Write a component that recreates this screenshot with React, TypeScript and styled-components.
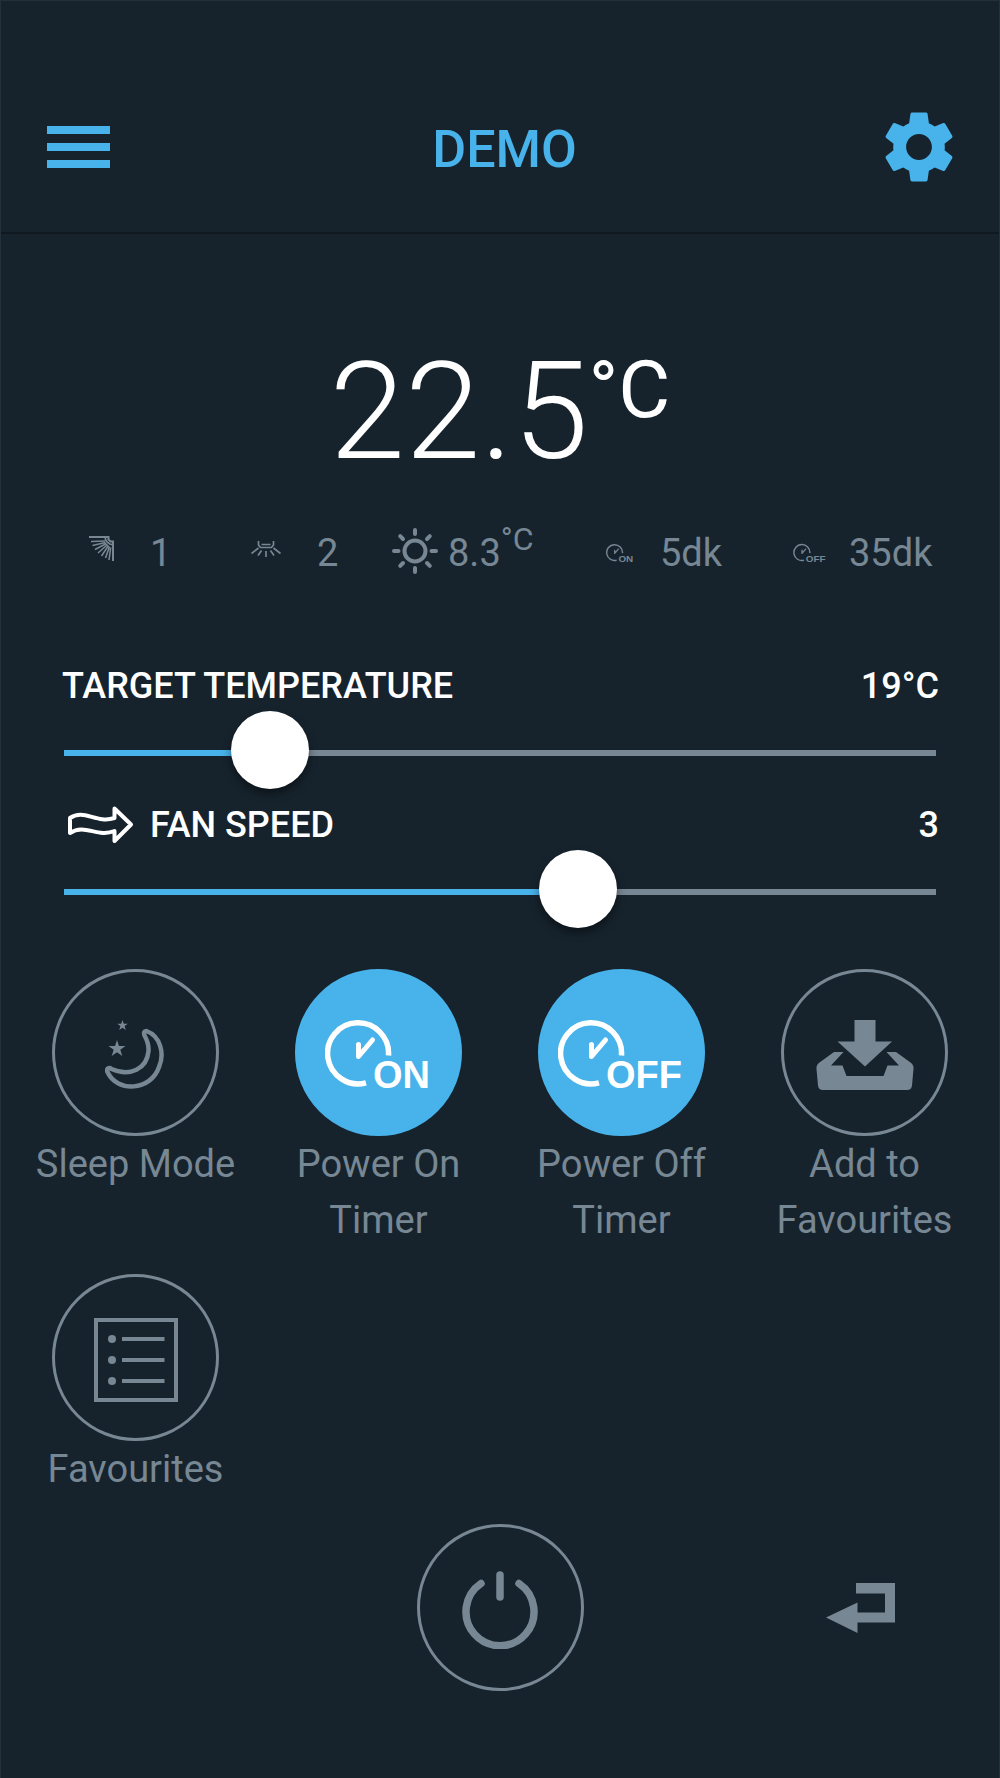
import { useState } from "react";
import type { CSSProperties, ReactNode } from "react";
import styled, { createGlobalStyle } from "styled-components";
import { MdSettings } from "react-icons/md";

const color = {
  background: "#16232d",
  edge: "#22303a",
  divider: "#10191f",
  accent: "#48b2ea",
  muted: "#778793",
  white: "#ffffff",
};

const GlobalStyle = createGlobalStyle`
  *, *::before, *::after { box-sizing: border-box; }
  body {
    margin: 0;
    background: ${color.background};
    color: ${color.muted};
    font-family: Roboto, "Liberation Sans", sans-serif;
  }
  button {
    padding: 0;
    border: 0;
    background: none;
    color: inherit;
    font: inherit;
    cursor: pointer;
  }
  svg { display: block; flex: none; }
`;

const Screen = styled.div`
  min-height: 100vh;
  border: 1px solid ${color.edge};
  border-bottom: 0;
`;

const Header = styled.header`
  display: grid;
  grid-template-columns: 1fr auto 1fr;
  align-items: center;
  padding: 103px 37px 42px 46px;
  border-bottom: 2px solid ${color.divider};
  color: ${color.accent};
`;

const HeaderButton = styled.button<{ $end?: boolean }>`
  justify-self: ${(p) => (p.$end ? "end" : "start")};
`;

const Title = styled.h1`
  margin: 0;
  padding-top: 6px;
  font-size: 52px;
  line-height: 60px;
  font-weight: 500;
`;

const Reading = styled.div`
  display: flex;
  justify-content: center;
  margin-top: 98px;
  color: ${color.white};
  font-size: 136px;
  line-height: 160px;
  font-weight: 300;
`;

const ReadingUnit = styled.span`
  font-size: 80px;
  line-height: 116px;
  font-weight: 400;
`;

const Stats = styled.ul`
  display: grid;
  grid-template-columns: 162fr 141fr 214fr 187fr 144fr;
  margin: 31px 0 0;
  padding: 0 62px 0 88px;
  list-style: none;
  font-size: 38px;
  line-height: 60px;
`;

const Stat = styled.li<{ $gap: number }>`
  display: flex;
  align-items: center;
  gap: ${(p) => p.$gap}px;
`;

const StatValue = styled.span`
  display: flex;
`;

const StatUnit = styled.span`
  font-size: 32px;
  line-height: 32px;
`;

const Sliders = styled.section`
  display: grid;
  gap: 11px;
  margin-top: 78px;
  padding: 0 63px 0 59px;
  color: ${color.white};
  font-size: 36px;
  line-height: 50px;
  font-weight: 500;
`;

const SliderHead = styled.div`
  display: flex;
  justify-content: space-between;
  margin: 0 -3px 0 2px;
`;

const SliderLabel = styled.label`
  display: flex;
  align-items: center;
  gap: 16px;
`;

const FlowIcon = styled.svg`
  margin-left: 6px;
`;

const Range = styled.input`
  display: block;
  width: 100%;
  height: 78px;
  margin: 0;
  appearance: none;
  cursor: pointer;
  background: linear-gradient(
      to right,
      ${color.accent} var(--fill),
      ${color.muted} var(--fill)
    )
    no-repeat 4px 39px / calc(100% - 4px) 6px;

  &::-webkit-slider-runnable-track {
    height: 78px;
  }
  &::-webkit-slider-thumb {
    appearance: none;
    width: 78px;
    height: 78px;
    border-radius: 50%;
    background: ${color.white};
    box-shadow: 0 5px 10px rgba(0, 0, 0, 0.45);
  }
`;

const Actions = styled.section`
  display: grid;
  grid-template-columns: repeat(4, 1fr);
  gap: 26px 0;
  margin-top: 41px;
  padding: 0 13px;
`;

const Action = styled.button`
  display: flex;
  flex-direction: column;
  align-items: center;
  justify-content: flex-start;
`;

const Disc = styled.span<{ $active?: boolean }>`
  display: grid;
  place-items: center;
  width: 167px;
  height: 167px;
  padding-top: 4px;
  border: 3px solid ${(p) => (p.$active ? color.accent : color.muted)};
  border-radius: 50%;
  background: ${(p) => (p.$active ? color.accent : "transparent")};
  color: ${(p) => (p.$active ? color.white : color.muted)};
`;

const ActionLabel = styled.span`
  font-size: 38px;
  line-height: 56px;
`;

const Footer = styled.footer`
  display: grid;
  grid-template-columns: 1fr auto 1fr;
  align-items: center;
  margin-top: 27px;
  padding: 0 103px 80px;
`;

const PowerButton = styled.button`
  grid-column: 2;
`;

const BackButton = styled.button`
  justify-self: end;
`;

function MenuIcon() {
  return (
    <svg width="63" height="43" viewBox="0 0 63 43" fill="currentColor" aria-hidden="true">
      <path d="M0 0h63v8H0zM0 17h63v8H0zM0 34h63v8H0z" />
    </svg>
  );
}

function VerticalSwingIcon() {
  return (
    <svg width="25" height="35" viewBox="0 0 25 35" fill="none" stroke="currentColor" strokeWidth="1.6" aria-hidden="true">
      <path d="M0 1h19.500v2.500l2 2H24V25" strokeWidth="2" />
      <path d="M16 1.500Q17 7.500 24 9" />
      <path d="M2 5.500l14-.5M3.500 9.500l13-3M6 13.500l11.500-6M9 17l9.500-8.500M12.500 20l7-10.500M16.500 22l4-11.500M20 24l1.700-12.500" />
    </svg>
  );
}

function HorizontalSwingIcon() {
  return (
    <svg width="30" height="24" viewBox="0 0 30 24" fill="none" stroke="currentColor" strokeWidth="1.700" aria-hidden="true">
      <path d="M7.500 0v4l2 2.500h11l2-2.500V0M10.500 3.500h9" />
      <path d="M7.500 7L.5 12.500M10.500 9.500l-3.500 5M15 10v6M19.500 9.500l3.500 5M22.500 7l7 5.500" />
    </svg>
  );
}

function SunIcon() {
  return (
    <svg width="46" height="50" viewBox="0 0 46 50" fill="none" stroke="currentColor" strokeWidth="4" strokeLinecap="round" aria-hidden="true">
      <circle cx="23" cy="23" r="10.500" />
      <path d="M23 2v4M23 40v4M2 23h4.500M39.500 23H44M8.200 8.200l2.800 2.800M35 35l2.800 2.800M8.200 37.800L11 35M35 11l2.800-2.800" />
    </svg>
  );
}

type TimerIconProps = { word: "ON" | "OFF"; height: number };

function TimerIcon({ word, height }: TimerIconProps) {
  const width = word === "ON" ? 108 : 128;
  return (
    <svg
      width={Math.round((width * height) / 84)}
      height={height}
      viewBox={`0 -7 ${width} 84`}
      fill="none"
      stroke="currentColor"
      strokeWidth="5.500"
      aria-hidden="true"
    >
      <path d="M63.500 35.500A30.500 30.500 0 1 0 41 62.800" />
      <path d="M33.500 24.500v12l14-16.500" strokeWidth="5" strokeLinecap="round" strokeLinejoin="round" />
      <text x="48" y="68" fill="currentColor" stroke="none" fontFamily="Liberation Sans, sans-serif" fontSize="38" fontWeight="700">
        {word}
      </text>
    </svg>
  );
}

function AirFlowIcon() {
  return (
    <FlowIcon width="66" height="38" viewBox="0 0 66 38" fill="none" stroke="currentColor" strokeWidth="4" strokeLinejoin="round" aria-hidden="true">
      <path d="M2 12C16 2 28 18 46.500 12V2.500L63 18.500L46.500 35V25C29 32 17 17 2 27Z" />
    </FlowIcon>
  );
}

function MoonIcon() {
  return (
    <svg width="62" height="70" viewBox="0 0 62 70" fill="none" aria-hidden="true">
      <path
        d="M41.500 11C55 16 60 33 54 47C46 71 12 73 2.500 52C1 48.500 4 47 6.500 49C25 57 42 49 43.500 31C44 24 42 20 39.500 15.500C38.500 12.500 39 11 41.500 11Z"
        stroke="currentColor"
        strokeWidth="4.500"
      />
      <path
        d="M17.500 0l1.300 3.700h4l-3.200 2.400 1.200 3.900-3.300-2.300-3.300 2.300 1.200-3.900-3.200-2.400h4zM12 20l2 6h6.500l-5.200 3.800 2 6.200-5.300-3.800-5.300 3.800 2-6.200L3.500 26H10z"
        fill="currentColor"
      />
    </svg>
  );
}

function SaveIcon() {
  return (
    <svg width="98" height="70" viewBox="0 0 98 70" fill="currentColor" aria-hidden="true">
      <path d="M38.500 0h21v21.500H76L49 46.500L21.500 21.500h17z" />
      <path d="M18 32h9.500L15 45.500h11.500L30.500 56h37l4-10.500H83L70.500 32H80l14.500 10.500Q98 45 97.500 49L96 65.500Q95.500 70 91 70H7Q2.500 70 2 65.500L.5 49Q0 45 3.500 42.500z" />
    </svg>
  );
}

function ListIcon() {
  return (
    <svg width="84" height="84" viewBox="0 0 84 84" fill="none" stroke="currentColor" strokeWidth="4" aria-hidden="true">
      <path d="M2 2h80v80H2z" />
      <path d="M28 21h42.500M28 42h42.500M28 63h42.500" />
      <g fill="currentColor" stroke="none">
        <circle cx="18" cy="21" r="4" />
        <circle cx="18" cy="42" r="4" />
        <circle cx="18" cy="63" r="4" />
      </g>
    </svg>
  );
}

function PowerIcon() {
  return (
    <svg width="76" height="78" viewBox="0 0 76 78" fill="none" stroke="currentColor" strokeWidth="7.500" strokeLinecap="round" aria-hidden="true">
      <path d="M19 12.500A34 34 0 1 0 57 12.500M38 4v22" />
    </svg>
  );
}

function ReturnIcon() {
  return (
    <svg width="70" height="50" viewBox="0 0 70 50" fill="currentColor" aria-hidden="true">
      <path d="M30 0h39v39.500H31.500V50L0 34.500L31.500 19.500v10H59v-19H30z" />
    </svg>
  );
}

type SliderProps = {
  id: string;
  label: string;
  icon?: ReactNode;
  min: number;
  max: number;
  initial: number;
  unit?: string;
};

function Slider({ id, label, icon, min, max, initial, unit = "" }: SliderProps) {
  const [value, setValue] = useState(initial);
  const fill = `${((value - min) / (max - min)) * 100}%`;
  return (
    <div>
      <SliderHead>
        <SliderLabel htmlFor={id}>
          {icon}
          {label}
        </SliderLabel>
        <output htmlFor={id}>
          {value}
          {unit}
        </output>
      </SliderHead>
      <Range
        id={id}
        type="range"
        min={min}
        max={max}
        value={value}
        onChange={(e) => setValue(Number(e.target.value))}
        style={{ "--fill": fill } as CSSProperties}
      />
    </div>
  );
}

const actions: { label: string; icon: ReactNode; active?: boolean }[] = [
  { label: "Sleep Mode", icon: <MoonIcon /> },
  { label: "Power On Timer", icon: <TimerIcon word="ON" height={84} />, active: true },
  { label: "Power Off Timer", icon: <TimerIcon word="OFF" height={84} />, active: true },
  { label: "Add to Favourites", icon: <SaveIcon /> },
  { label: "Favourites", icon: <ListIcon /> },
];

export default function App() {
  return (
    <>
      <GlobalStyle />
      <Screen>
        <Header>
          <HeaderButton aria-label="Menu">
            <MenuIcon />
          </HeaderButton>
          <Title>DEMO</Title>
          <HeaderButton $end aria-label="Settings">
            <MdSettings size={86} />
          </HeaderButton>
        </Header>

        <main>
          <Reading>
            22.5<ReadingUnit>°C</ReadingUnit>
          </Reading>

          <Stats>
            <Stat $gap={36}>
              <VerticalSwingIcon />1
            </Stat>
            <Stat $gap={36}>
              <HorizontalSwingIcon />2
            </Stat>
            <Stat $gap={10}>
              <SunIcon />
              <StatValue>
                8.3<StatUnit>°C</StatUnit>
              </StatValue>
            </Stat>
            <Stat $gap={26}>
              <TimerIcon word="ON" height={22} />
              5dk
            </Stat>
            <Stat $gap={22}>
              <TimerIcon word="OFF" height={22} />
              35dk
            </Stat>
          </Stats>

          <Sliders>
            <Slider id="target" label="TARGET TEMPERATURE" min={16} max={30} initial={19} unit="°C" />
            <Slider id="fan" label="FAN SPEED" icon={<AirFlowIcon />} min={0} max={5} initial={3} />
          </Sliders>

          <Actions>
            {actions.map((a) => (
              <Action key={a.label} aria-pressed={!!a.active}>
                <Disc $active={a.active}>{a.icon}</Disc>
                <ActionLabel>{a.label}</ActionLabel>
              </Action>
            ))}
          </Actions>
        </main>

        <Footer>
          <PowerButton aria-label="Power">
            <Disc>
              <PowerIcon />
            </Disc>
          </PowerButton>
          <BackButton aria-label="Back">
            <ReturnIcon />
          </BackButton>
        </Footer>
      </Screen>
    </>
  );
}
